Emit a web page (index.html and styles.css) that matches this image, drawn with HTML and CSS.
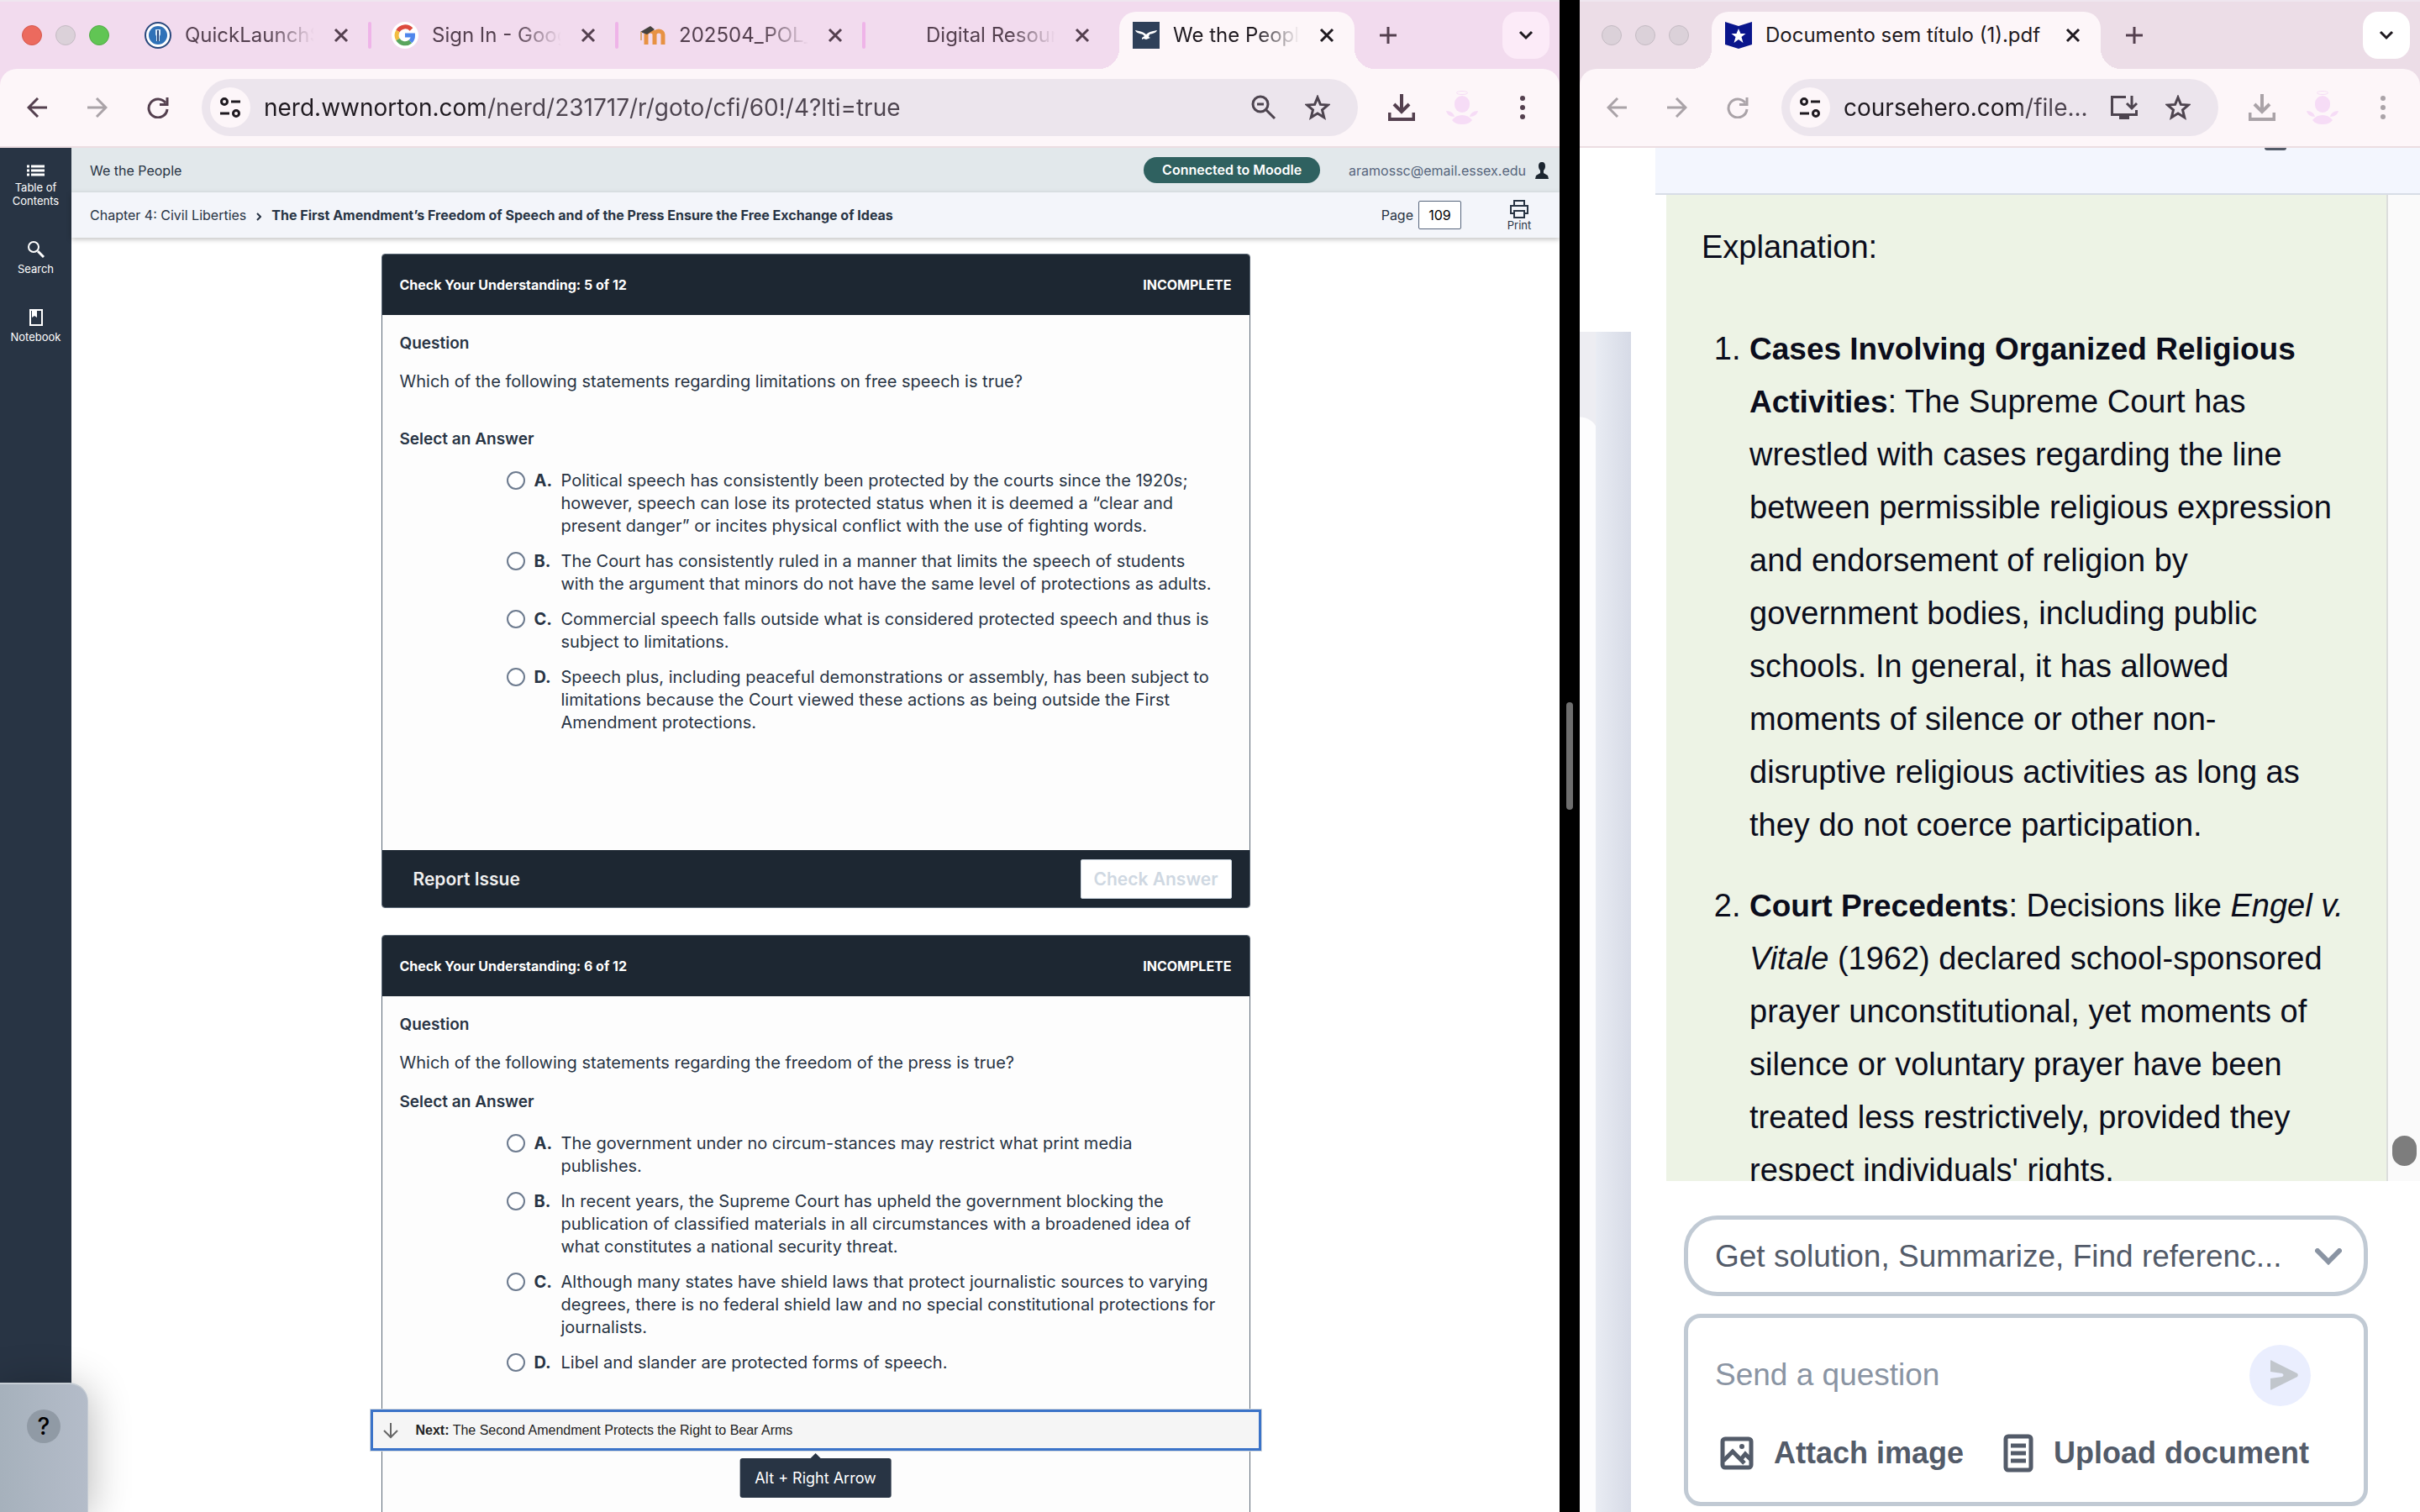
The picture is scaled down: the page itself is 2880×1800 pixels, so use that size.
FILE: index.html
```html
<!DOCTYPE html>
<html lang="en">
<head>
<meta charset="UTF-8">
<title>We the People</title>
<meta name="viewport" content="width=device-width, initial-scale=1.0">
<link rel="stylesheet" href="styles.css">
</head>
<body>

<!-- Shared icons -->
<svg class="sprite" aria-hidden="true">
  <symbol id="i-close" viewBox="0 0 20 20"><path d="M3 3l14 14M17 3L3 17" fill="none" stroke="currentColor" stroke-width="3"/></symbol>
  <symbol id="i-plus" viewBox="0 0 20 20"><path d="M10 0v20M0 10h20" fill="none" stroke="currentColor" stroke-width="3"/></symbol>
  <symbol id="i-chevron" viewBox="0 0 20 20"><path d="M3 6l7 7 7-7" fill="none" stroke="currentColor" stroke-width="3"/></symbol>
  <symbol id="i-back" viewBox="0 0 24 24"><path d="M24 12H2M13 1L2 12l11 11" fill="none" stroke="currentColor" stroke-width="3"/></symbol>
  <symbol id="i-forward" viewBox="0 0 24 24"><path d="M0 12h22M11 1l11 11-11 11" fill="none" stroke="currentColor" stroke-width="3"/></symbol>
  <symbol id="i-reload" viewBox="0 0 26 26"><path d="M22 7.500A11 11 0 1 0 24 15M24 1v8.500h-9" fill="none" stroke="currentColor" stroke-width="3"/></symbol>
  <symbol id="i-tune" viewBox="0 0 26 26"><g fill="none" stroke="currentColor" stroke-width="3"><circle cx="6" cy="6" r="3.500"/><path d="M14 6h11M1 20h11"/><circle cx="20" cy="20" r="3.500"/></g></symbol>
  <symbol id="i-star" viewBox="0 0 30 30"><path d="M15 3l3.400 8.400 9 .7-6.900 5.800 2.200 8.800L15 21.900l-7.700 4.800 2.200-8.800-6.900-5.800 9-.7z" fill="none" stroke="currentColor" stroke-width="3"/></symbol>
  <symbol id="i-download" viewBox="0 0 32 32"><path d="M16 0v20" fill="none" stroke="currentColor" stroke-width="4"/><path d="M7 12l9 9 9-9M1.500 22v8h29v-8" fill="none" stroke="currentColor" stroke-width="4"/></symbol>
  <symbol id="i-dots" viewBox="0 0 6 28"><g fill="currentColor"><circle cx="3" cy="3" r="3"/><circle cx="3" cy="14" r="3"/><circle cx="3" cy="25" r="3"/></g></symbol>
  <symbol id="i-profile" viewBox="0 0 38 40"><g fill="currentColor"><ellipse cx="19" cy="2.500" rx="6.500" ry="2" fill="none" stroke="currentColor"/><rect x="10" y="6" width="18" height="20" rx="9"/><path d="M0 24c6 0 9 3 10 7-6 0-9-3-10-7zM38 24c-6 0-9 3-10 7 6 0 9-3 10-7zM7 35c3-4 7-6 12-6s9 2 12 6c-3 4-7 5-12 5s-9-1-12-5z"/></g></symbol>
</svg>

<div class="desktop">

  <!-- Left window -->
  <section class="window reader">
    <header class="tab-strip">
      <div class="lights"><i class="light red"></i><i class="light"></i><i class="light green"></i></div>
      <div class="tab">
        <svg class="favicon" viewBox="0 0 32 32"><circle cx="16" cy="16" r="15" fill="#fff" stroke="#27477c" stroke-width="2"/><circle cx="16" cy="16" r="11" fill="#2f72b8"/><path d="M13 9h6v6l-1 2v6h-4v-6l-1-2z" fill="#d9e9f7"/><path d="M16 10v13" stroke="#27477c" stroke-width="2"/></svg>
        <a class="tab-title" href="#">QuickLaunchS</a>
        <button class="tab-close" aria-label="Close tab"><svg><use href="#i-close"/></svg></button>
      </div>
      <div class="tab">
        <svg class="favicon" viewBox="0 0 32 32"><circle cx="16" cy="16" r="16" fill="#fff"/><g fill="none" stroke-width="5"><path d="M23.500 9A10 10 0 0 0 7.500 11" stroke="#dd4b3e"/><path d="M7.500 11a10 10 0 0 0 0 10" stroke="#f2bd42"/><path d="M7.500 21a10 10 0 0 0 15 2.500" stroke="#58a55c"/><path d="M16 16h9.500a10 10 0 0 1-3 7.500" stroke="#4f86ec"/></g></svg>
        <a class="tab-title" href="#">Sign In - Goog</a>
        <button class="tab-close" aria-label="Close tab"><svg><use href="#i-close"/></svg></button>
      </div>
      <div class="tab">
        <svg class="favicon" viewBox="0 0 32 32"><path d="M9 27V15a5 4 0 0 1 10 0v12M19 15a5 4 0 0 1 10 0v12" fill="none" stroke="#e79243" stroke-width="5"/><path d="M2 12L14 5l5 4-9 6z" fill="#45413e"/><path d="M3 12v10" stroke="#dba878" stroke-width="2"/></svg>
        <a class="tab-title" href="#">202504_POL_</a>
        <button class="tab-close" aria-label="Close tab"><svg><use href="#i-close"/></svg></button>
      </div>
      <div class="tab last">
        <span class="favicon"></span>
        <a class="tab-title" href="#">Digital Resour</a>
        <button class="tab-close" aria-label="Close tab"><svg><use href="#i-close"/></svg></button>
      </div>
      <div class="tab active">
        <svg class="favicon" viewBox="0 0 32 32"><path d="M0 0h32v32H0z" fill="#2f4059"/><path d="M3 10c4 1 9 1 13 5 4-4 9-4 13-5-1 3-5 4-9 5l-1 3 2 1-5 2-3-1-2 1v-2l3-2-2-2C8 14 4 13 3 10z" fill="#fff"/></svg>
        <a class="tab-title" href="#">We the People</a>
        <button class="tab-close" aria-label="Close tab"><svg><use href="#i-close"/></svg></button>
      </div>
      <button class="new-tab" aria-label="New tab"><svg><use href="#i-plus"/></svg></button>
      <button class="tab-search" aria-label="Search tabs"><svg><use href="#i-chevron"/></svg></button>
    </header>

    <div class="toolbar">
      <button class="tool" aria-label="Back"><svg class="s24"><use href="#i-back"/></svg></button>
      <button class="tool faded" aria-label="Forward"><svg class="s24"><use href="#i-forward"/></svg></button>
      <button class="tool" aria-label="Reload"><svg class="s26"><use href="#i-reload"/></svg></button>
      <div class="omnibox">
        <button class="tune" aria-label="Site information"><svg class="s26"><use href="#i-tune"/></svg></button>
        <input class="url url-norton" aria-label="Address" value="nerd.wwnorton.com/nerd/231717/r/goto/cfi/60!/4?lti=true">
        <button class="box-tool" aria-label="Zoom"><svg class="s30" viewBox="0 0 30 30"><g fill="none" stroke="currentColor" stroke-width="3"><circle cx="11" cy="11" r="9"/><path d="M18 18l10 10M7 11h8"/></g></svg></button>
        <button class="box-tool" aria-label="Bookmark"><svg class="s30"><use href="#i-star"/></svg></button>
      </div>
      <button class="tool" aria-label="Downloads"><svg class="s32"><use href="#i-download"/></svg></button>
      <button class="tool profile" aria-label="Profile"><svg class="s40"><use href="#i-profile"/></svg></button>
      <button class="tool" aria-label="Menu"><svg class="dots"><use href="#i-dots"/></svg></button>
    </div>

    <div class="norton">
      <nav class="sidebar">
        <a href="#"><svg width="22" height="14" viewBox="0 0 22 14"><path d="M0 2h3M5 2h16M0 7h3M5 7h16M0 12h3M5 12h16" stroke="currentColor" stroke-width="3"/></svg>Table of Contents</a>
        <a href="#"><svg width="20" height="20" viewBox="0 0 20 20"><g fill="none" stroke="currentColor" stroke-width="2"><circle cx="7" cy="7" r="6"/><path d="M12 12l7 7" stroke-width="3"/></g></svg>Search</a>
        <a href="#"><svg width="16" height="20" viewBox="0 0 16 20"><path d="M1 1h14v18H1z" fill="none" stroke="currentColor" stroke-width="2"/><path d="M3 1h6v9L6 8l-3 2z" fill="currentColor"/></svg>Notebook</a>
      </nav>

      <div class="book">
        <div class="book-bar">
          <span>We the People</span>
          <span class="pill">Connected to Moodle</span>
          <a class="account" href="#">aramossc@email.essex.edu
            <svg width="18" height="20" viewBox="0 0 18 20"><path d="M9 0c3 0 4 2 4 5 0 2-1 4-2 5v3l5 3 1 4H1l1-4 5-3v-3C6 9 5 7 5 5c0-3 1-5 4-5z" fill="#1c2630"/></svg>
          </a>
        </div>
        <div class="crumb-bar">
          <a href="#">Chapter 4: Civil Liberties</a>
          <svg width="6" height="10" viewBox="0 0 6 10"><path d="M1 1l4 4-4 4" fill="none" stroke="currentColor" stroke-width="2"/></svg>
          <strong>The First Amendment’s Freedom of Speech and of the Press Ensure the Free Exchange of Ideas</strong>
          <label class="page-no">Page <input value="109"></label>
          <button class="print">
            <svg width="22" height="22" viewBox="0 0 22 22"><g fill="none" stroke="currentColor" stroke-width="2"><path d="M5 7V1h12v6M5 16H1V7h20v9h-4M5 13h12v8H5z"/></g></svg>
            Print
          </button>
        </div>

        <main class="quiz-list">
          <form class="quiz">
            <div class="quiz-head"><span>Check Your Understanding: 5 of 12</span><span>INCOMPLETE</span></div>
            <div class="quiz-body first">
              <h3>Question</h3>
              <p>Which of the following statements regarding limitations on free speech is true?</p>
              <h3>Select an Answer</h3>
              <ul class="answers">
                <li><label><input type="radio" name="q5"><b>A.</b><span>Political speech has consistently been protected by the courts since the 1920s;<br>however, speech can lose its protected status when it is deemed a “clear and<br>present danger” or incites physical conflict with the use of fighting words.</span></label></li>
                <li><label><input type="radio" name="q5"><b>B.</b><span>The Court has consistently ruled in a manner that limits the speech of students<br>with the argument that minors do not have the same level of protections as adults.</span></label></li>
                <li><label><input type="radio" name="q5"><b>C.</b><span>Commercial speech falls outside what is considered protected speech and thus is<br>subject to limitations.</span></label></li>
                <li><label><input type="radio" name="q5"><b>D.</b><span>Speech plus, including peaceful demonstrations or assembly, has been subject to<br>limitations because the Court viewed these actions as being outside the First<br>Amendment protections.</span></label></li>
              </ul>
            </div>
            <div class="quiz-foot">
              <button type="button" class="report">Report Issue</button>
              <button type="button" class="check" disabled>Check Answer</button>
            </div>
          </form>

          <form class="quiz">
            <div class="quiz-head"><span>Check Your Understanding: 6 of 12</span><span>INCOMPLETE</span></div>
            <div class="quiz-body second">
              <h3>Question</h3>
              <p>Which of the following statements regarding the freedom of the press is true?</p>
              <h3>Select an Answer</h3>
              <ul class="answers">
                <li><label><input type="radio" name="q6"><b>A.</b><span>The government under no circum-stances may restrict what print media<br>publishes.</span></label></li>
                <li><label><input type="radio" name="q6"><b>B.</b><span>In recent years, the Supreme Court has upheld the government blocking the<br>publication of classified materials in all circumstances with a broadened idea of<br>what constitutes a national security threat.</span></label></li>
                <li><label><input type="radio" name="q6"><b>C.</b><span>Although many states have shield laws that protect journalistic sources to varying<br>degrees, there is no federal shield law and no special constitutional protections for<br>journalists.</span></label></li>
                <li><label><input type="radio" name="q6"><b>D.</b><span>Libel and slander are protected forms of speech.</span></label></li>
              </ul>
            </div>
          </form>
        </main>

        <!-- Floating "next section" link with its shortcut tooltip -->
        <div class="next-wrap">
          <a class="next" href="#">
            <svg width="20" height="20" viewBox="0 0 20 20"><path d="M10 1v17M2 10l8 8 8-8" fill="none" stroke="#666" stroke-width="2"/></svg>
            <span><b>Next:</b> The Second Amendment Protects the Right to Bear Arms</span>
          </a>
          <div class="tooltip" role="tooltip">Alt + Right Arrow</div>
        </div>
      </div>

      <div class="help-corner"><button aria-label="Help">?</button></div>
    </div>
  </section>

  <div class="divider"><i></i></div>

  <!-- Right window -->
  <section class="window hero">
    <header class="tab-strip">
      <div class="lights"><i class="light"></i><i class="light"></i><i class="light"></i></div>
      <div class="tab active">
        <svg class="favicon" viewBox="0 0 32 32"><path d="M0 0l16 5 16-5v27l-16 5-16-5z" fill="#0a158c"/><path d="M16 8l2.500 6h6l-5 4 2 7-5.500-4-5.500 4 2-7-5-4h6z" fill="#fff"/></svg>
        <a class="tab-title" href="#">Documento sem título (1).pdf</a>
        <button class="tab-close" aria-label="Close tab"><svg><use href="#i-close"/></svg></button>
      </div>
      <button class="new-tab" aria-label="New tab"><svg><use href="#i-plus"/></svg></button>
      <button class="tab-search" aria-label="Search tabs"><svg><use href="#i-chevron"/></svg></button>
    </header>

    <div class="toolbar">
      <button class="tool faded" aria-label="Back"><svg class="s24"><use href="#i-back"/></svg></button>
      <button class="tool faded" aria-label="Forward"><svg class="s24"><use href="#i-forward"/></svg></button>
      <button class="tool faded" aria-label="Reload"><svg class="s26"><use href="#i-reload"/></svg></button>
      <div class="omnibox">
        <button class="tune" aria-label="Site information"><svg class="s26"><use href="#i-tune"/></svg></button>
        <input class="url url-hero" aria-label="Address" value="coursehero.com/file...">
        <button class="box-tool" aria-label="Install"><svg class="s32" viewBox="0 0 32 32"><path d="M18 3.500H1.500v21h29V19M25 2v14M19 11l6 6 6-6" fill="none" stroke="currentColor" stroke-width="3"/><path d="M10 24h12v6H10z" fill="currentColor"/></svg></button>
        <button class="box-tool" aria-label="Bookmark"><svg class="s30"><use href="#i-star"/></svg></button>
      </div>
      <button class="tool faded" aria-label="Downloads"><svg class="s32"><use href="#i-download"/></svg></button>
      <button class="tool profile" aria-label="Profile"><svg class="s40"><use href="#i-profile"/></svg></button>
      <button class="tool faded" aria-label="Menu"><svg class="dots"><use href="#i-dots"/></svg></button>
    </div>

    <div class="hero-page">
      <div class="page-edge"><div class="edge-left"></div><div class="edge-shade"></div></div>
      <aside class="panel">
        <div class="panel-top"><i></i></div>
        <div class="panel-scroll">
          <div class="explain">
            <p>Explanation:</p>
            <ol>
              <li><b>Cases Involving Organized Religious<br>Activities</b>: The Supreme Court has<br>wrestled with cases regarding the line<br>between permissible religious expression<br>and endorsement of religion by<br>government bodies, including public<br>schools. In general, it has allowed<br>moments of silence or other non-<br>disruptive religious activities as long as<br>they do not coerce participation.</li>
              <li><b>Court Precedents</b>: Decisions like <em>Engel v.<br>Vitale</em> (1962) declared school-sponsored<br>prayer unconstitutional, yet moments of<br>silence or voluntary prayer have been<br>treated less restrictively, provided they<br>respect individuals' rights.</li>
            </ol>
          </div>
          <div class="scrollbar"><i></i></div>
        </div>
        <div class="ask">
          <div class="picker">
            <select aria-label="Action"><option>Get solution, Summarize, Find referenc...</option></select>
            <svg width="32" height="20" viewBox="0 0 32 20"><path d="M3 3l13 13L29 3" fill="none" stroke="#8a94a3" stroke-width="6" stroke-linecap="round"/></svg>
          </div>
          <div class="composer">
            <div class="composer-row">
              <input aria-label="Question" placeholder="Send a question">
              <button class="send" aria-label="Send"><svg width="34" height="36" viewBox="0 0 34 36"><path d="M1 1c0-1 1-1 2 0l30 15c1 1 1 3 0 4L3 35c-1 1-2 1-2 0V22l14-2c2-1 2-3 0-4L1 14z" fill="#c1c6cc"/></svg></button>
            </div>
            <div class="composer-actions">
              <button><svg width="40" height="40" viewBox="0 0 40 40"><g fill="none" stroke="currentColor" stroke-width="5"><rect x="3" y="3" width="34" height="34" rx="3"/><path d="M4 29l11-11 14 14M25 27l5-6 7 7"/></g><circle cx="26" cy="12" r="3" fill="currentColor"/></svg>Attach image</button>
              <button><svg width="36" height="46" viewBox="0 0 36 46"><g fill="none" stroke="currentColor" stroke-width="5"><rect x="3" y="3" width="30" height="40" rx="3"/><path d="M9 14h18M9 23h18M9 32h18"/></g></svg>Upload document</button>
            </div>
          </div>
        </div>
      </aside>
    </div>
  </section>

</div>
</body>
</html>
```
FILE: styles.css
```css
* {
  box-sizing: border-box;
}
body {
  margin: 0;
  font-family: Inter, "Liberation Sans", sans-serif;
  color: #283444;
  background: #000;
}
button, input, select {
  font: inherit;
  color: inherit;
  background: none;
  border: none;
  padding: 0;
  margin: 0;
}
a {
  color: inherit;
  text-decoration: none;
}
svg {
  display: block;
  flex: none;
}
.sprite {
  position: absolute;
  width: 0;
  height: 0;
}
.desktop {
  display: flex;
  height: 100vh;
  overflow: hidden;
}
.window {
  display: flex;
  flex-direction: column;
  min-width: 0;
  height: 100%;
}
.reader {
  flex: 1856;
  background: #f2dbee;
}
.hero {
  flex: 1000;
  background: #ecdde7;
}
.divider {
  flex: 0 0 24px;
  display: flex;
  align-items: center;
  justify-content: center;
}
.divider i {
  width: 8px;
  height: 128px;
  border-radius: 4px;
  background: #6e6e6e;
}

/* Tab strip */
.tab-strip {
  display: flex;
  align-items: flex-end;
  height: 82px;
  border-top: 2px solid #efe6ef;
  padding-right: 12px;
}
.lights {
  display: flex;
  gap: 16px;
  align-self: center;
  padding-left: 26px;
  margin-right: 18px;
}
.hero .lights {
  margin-right: 27px;
}
.light {
  width: 24px;
  height: 24px;
  border-radius: 50%;
  background: #dbd1d9;
  border: 1px solid #c4bbc3;
}
.light.red {
  background: #ec6a5e;
  border-color: #d5574c;
}
.light.green {
  background: #61c554;
  border-color: #50ab45;
}
.tab {
  position: relative;
  display: flex;
  align-items: center;
  flex: 0 1 294px;
  min-width: 0;
  height: 68px;
  padding: 0 26px 12px 24px;
  color: #54404f;
}
.tab::after {
  content: "";
  position: absolute;
  right: 0;
  top: 12px;
  width: 4px;
  height: 32px;
  border-radius: 2px;
  background: #efb4e8;
}
.tab.last::after {
  display: none;
}
.favicon {
  flex: none;
  width: 32px;
  height: 32px;
  margin-right: 16px;
}
.tab-title {
  flex: 1;
  overflow: hidden;
  white-space: nowrap;
  font-size: 24px;
  line-height: 32px;
  -webkit-mask-image: linear-gradient(to right, #000 65%, transparent);
  mask-image: linear-gradient(to right, #000 65%, transparent);
}
.tab-close {
  width: 20px;
  height: 20px;
  margin-left: 22px;
}
.tab-close svg,
.tab-search svg {
  width: 20px;
  height: 20px;
}
.tab.active {
  flex: 0 1 280px;
  margin-left: 8px;
  padding: 0 23px 12px 16px;
  border-radius: 20px 20px 0 0;
  background: #fdf6f9;
  color: #1f1a20;
}
.tab.active::before,
.tab.active::after {
  content: "";
  position: absolute;
  top: auto;
  bottom: 0;
  width: 24px;
  height: 24px;
  border-radius: 0;
}
.tab.active::before {
  left: -24px;
  background: radial-gradient(circle at 0 0, transparent 24px, #fdf6f9 24px);
}
.tab.active::after {
  right: -24px;
  background: radial-gradient(circle at 100% 0, transparent 24px, #fdf6f9 24px);
}
.hero .tab.active {
  flex-basis: 463px;
  margin-left: 0;
}
.hero .tab-title {
  -webkit-mask-image: none;
  mask-image: none;
}
.new-tab {
  align-self: center;
  margin-left: 30px;
  color: #54404f;
}
.new-tab svg {
  width: 20px;
  height: 20px;
}
.tab-search {
  display: flex;
  align-items: center;
  justify-content: center;
  width: 56px;
  height: 56px;
  margin-left: auto;
  margin-bottom: 12px;
  border-radius: 18px;
  background: #fcebf8;
  color: #1f1a20;
}
.hero .tab-search {
  background: #fff;
}

/* Toolbar */
.toolbar {
  display: flex;
  align-items: center;
  flex: none;
  height: 94px;
  padding: 0 8px;
  background: #fdf6f9;
  border-bottom: 2px solid #ecdde2;
  border-radius: 20px 20px 0 0;
  color: #54404f;
}
.tool {
  display: flex;
  align-items: center;
  justify-content: center;
  width: 72px;
  height: 72px;
}
.faded {
  color: #aaa3a8;
}
.profile {
  color: #f6dcf6;
}
.s24 { width: 24px; height: 24px; }
.s26 { width: 26px; height: 26px; }
.s30 { width: 30px; height: 30px; }
.s32 { width: 32px; height: 32px; }
.s40 { width: 38px; height: 40px; }
.dots { width: 6px; height: 28px; }
.omnibox {
  display: flex;
  align-items: center;
  flex: 1;
  min-width: 0;
  height: 68px;
  margin: 0 16px;
  padding: 0 16px 0 10px;
  border-radius: 34px;
  background: #ece5ed;
  color: #4d444f;
}
.tune {
  display: flex;
  align-items: center;
  justify-content: center;
  flex: none;
  width: 48px;
  height: 48px;
  margin-right: 16px;
  border-radius: 50%;
  background: #fdf6f9;
  color: #1f1a20;
}
/* host part of the address is darker than the path */
.url {
  flex: 1;
  min-width: 0;
  height: 40px;
  font-size: 28px;
  background-clip: text;
  -webkit-background-clip: text;
  -webkit-text-fill-color: transparent;
}
.url-norton {
  background-image: linear-gradient(to right, #1f1a20 262px, #4d444f 262px);
}
.url-hero {
  background-image: linear-gradient(to right, #1f1a20 212px, #4d444f 212px);
}
.box-tool {
  display: flex;
  align-items: center;
  justify-content: center;
  width: 64px;
  height: 64px;
}

/* Norton reader */
.norton {
  position: relative;
  display: flex;
  flex: 1;
  min-height: 0;
  background: #fff;
}
.sidebar {
  flex: 0 0 85px;
  background: #283444;
  color: #fff;
  padding-top: 20px;
}
.sidebar a {
  display: flex;
  flex-direction: column;
  align-items: center;
  gap: 5px;
  margin-bottom: 40px;
  font-size: 13px;
  line-height: 16px;
  text-align: center;
}
.book {
  position: relative;
  flex: 1;
  display: flex;
  flex-direction: column;
  min-width: 0;
}
.book-bar,
.crumb-bar {
  display: flex;
  align-items: center;
  flex: none;
  padding: 0 12px 0 22px;
  font-size: 16px;
}
.book-bar {
  height: 53px;
  background: #e2e8eb;
}
.crumb-bar {
  position: relative;
  height: 54px;
  padding-right: 15px;
  background: #f3f5fa;
  box-shadow: 0 2px 6px rgba(0,0,0,.25);
}
.crumb-bar svg {
  margin: 4px 12px 0;
}
.pill {
  margin-left: auto;
  margin-right: 34px;
  padding: 0 22px;
  border-radius: 16px;
  background: #2f6160;
  color: #fff;
  font-weight: 600;
  line-height: 31px;
}
.account {
  display: flex;
  align-items: center;
  gap: 10px;
  color: #56657c;
}
.page-no {
  display: flex;
  align-items: center;
  gap: 6px;
  margin-left: auto;
}
.page-no input {
  width: 51px;
  height: 34px;
  border: 1px solid #56657c;
  border-radius: 2px;
  background: #fff;
  color: #000;
  text-align: center;
}
.print {
  width: 66px;
  margin-left: 36px;
  font-size: 13px;
  line-height: 14px;
}
.crumb-bar .print svg {
  margin: 0 auto 1px;
}
.quiz-list {
  display: flex;
  flex-direction: column;
  align-items: center;
  gap: 32px;
  flex: 1;
  min-height: 0;
  overflow: hidden;
  padding-top: 19px;
}
.quiz {
  flex: none;
  width: 1034px;
  border: 1px solid #5b6876;
  border-radius: 4px;
  overflow: hidden;
  background: #fdfdfd;
}
.quiz-head {
  display: flex;
  justify-content: space-between;
  align-items: center;
  height: 72px;
  padding: 0 21px;
  background: #1d2732;
  color: #fff;
  font-size: 16px;
  font-weight: 700;
}
.quiz-body {
  padding: 20px 21px 0;
  font-size: 20px;
  line-height: 27px;
}
.quiz-body h3 {
  margin: 0;
  font-size: 19px;
  font-weight: 600;
}
.quiz-body p {
  margin: 19px 0;
}
.quiz-body.first p {
  margin-bottom: 41px;
}
.quiz-body.first {
  height: 637px;
}
.quiz-body.second {
  height: 640px;
}
.answers {
  display: flex;
  flex-direction: column;
  gap: 15px;
  list-style: none;
  margin: 23px 0 0;
  padding: 0 0 0 127px;
}
.answers label {
  display: flex;
  white-space: nowrap;
}
.answers b {
  width: 32px;
}
.answers input {
  appearance: none;
  flex: none;
  width: 22px;
  height: 22px;
  margin: 2px 11px 0 0;
  border: 2px solid #6d7b8f;
  border-radius: 50%;
  background: #fff;
}
.quiz-foot {
  display: flex;
  justify-content: space-between;
  align-items: center;
  height: 68px;
  padding: 0 21px 0 37px;
  background: #1d2732;
  font-size: 21px;
  font-weight: 600;
}
.report {
  color: #f0f0f0;
}
.check {
  width: 180px;
  height: 47px;
  border: 1px solid #cbd5e0;
  border-radius: 2px;
  background: #fff;
  color: #cfd8e2;
}
.next-wrap {
  position: absolute;
  left: 50%;
  bottom: 73px;
  width: 1060px;
  transform: translateX(-50%);
}
.next {
  display: flex;
  align-items: center;
  gap: 20px;
  height: 49px;
  padding-left: 11px;
  border: 3px solid #3b73c8;
  outline: 1px solid #d3d8de;
  background: #f5f5f5;
  color: #222;
  font-family: "Liberation Sans", Arial, sans-serif;
  font-size: 16px;
}
.tooltip {
  position: absolute;
  top: 58px;
  left: 50%;
  transform: translateX(-50%);
  padding: 0 18px;
  border-radius: 3px;
  background: #283444;
  color: #fff;
  font-size: 18px;
  line-height: 47px;
  white-space: nowrap;
}
.tooltip::before {
  content: "";
  position: absolute;
  left: 50%;
  top: -6px;
  margin-left: -7px;
  border: 7px solid transparent;
  border-top: 0;
  border-bottom-color: #283444;
}
.help-corner {
  position: absolute;
  left: 0;
  bottom: 0;
  width: 105px;
  height: 154px;
  padding: 30px 0 0 32px;
  border-top: 2px solid #c6cdd4;
  border-right: 1px solid #c6cdd4;
  border-top-right-radius: 22px;
  background: linear-gradient(to right, #a6b1bc, #b4bcc9);
  box-shadow: 0 6px 50px rgba(0,0,0,.3);
}
.help-corner button {
  width: 40px;
  height: 40px;
  border-radius: 50%;
  background: #909aa5;
  color: #000;
  font-size: 28px;
  font-weight: 500;
}

/* Course Hero page */
.hero-page {
  display: flex;
  flex: 1;
  min-height: 0;
  background: #fff;
  font-family: "Liberation Sans", Arial, sans-serif;
}
.page-edge {
  display: flex;
  flex: 0 0 90px;
  padding-top: 219px;
}
.edge-left {
  width: 19px;
  background: radial-gradient(circle at 0 124px, #fdfdfe 22px, transparent 23px) no-repeat, linear-gradient(#ededf2 124px, #fdfdfe 124px);
}
.edge-shade {
  width: 42px;
  background: linear-gradient(to right, #e9ecf3, #d6dae6);
}
.panel {
  display: flex;
  flex-direction: column;
  flex: 1;
  min-width: 0;
}
.panel-top {
  flex: none;
  height: 56px;
  background: #f3f6fe;
  border-bottom: 2px solid #d8dde6;
}
.panel-top i {
  display: block;
  width: 26px;
  height: 3px;
  margin-left: 725px;
  border-radius: 0 0 6px 6px;
  background: #535b69;
}
.panel-scroll {
  display: flex;
  flex: 1;
  min-height: 0;
  overflow: hidden;
  padding-left: 13px;
}
.explain {
  flex: 1;
  padding: 31px 0 0 42px;
  overflow: hidden;
  background: #edf3e5;
  border-right: 2px solid #dcdedd;
  color: #0b0d1c;
  font-size: 38px;
  line-height: 63px;
}
.explain p {
  margin: 0 0 58px;
}
.explain ol {
  margin: 0;
  padding-left: 57px;
  white-space: nowrap;
}
.explain li {
  margin-bottom: 33px;
}
.explain b {
  font-size: 37px;
}
.scrollbar {
  display: flex;
  justify-content: center;
  align-items: flex-end;
  flex: 0 0 38px;
  padding-bottom: 18px;
  background: #fafafa;
}
.scrollbar i {
  width: 29px;
  height: 36px;
  border-radius: 15px;
  background: #7d7d7d;
}
.ask {
  flex: none;
  padding: 41px 62px 7px 34px;
  color: #535b69;
  font-size: 37px;
}
.picker {
  position: relative;
}
.picker select {
  appearance: none;
  width: 100%;
  height: 96px;
  padding: 0 80px 0 32px;
  border: 5px solid #c1cad4;
  border-radius: 40px;
}
.picker svg {
  position: absolute;
  right: 31px;
  top: 39px;
}
.composer {
  height: 229px;
  margin-top: 21px;
  padding: 31px 32px 0;
  border: 5px solid #c1cad4;
  border-radius: 20px;
}
.composer-row {
  display: flex;
  align-items: center;
  height: 74px;
  padding-right: 31px;
}
.composer-row input {
  flex: 1;
  min-width: 0;
}
.composer-row input::placeholder {
  color: #8a94a3;
  opacity: 1;
}
.send {
  display: flex;
  align-items: center;
  justify-content: center;
  width: 73px;
  height: 73px;
  padding-left: 8px;
  border-radius: 50%;
  background: #eaeefe;
}
.composer-actions {
  display: flex;
  gap: 47px;
  margin-top: 33px;
  padding-left: 6px;
  font-size: 36px;
  font-weight: 700;
}
.composer-actions button {
  display: flex;
  align-items: center;
  gap: 24px;
  height: 46px;
  white-space: nowrap;
}
```
